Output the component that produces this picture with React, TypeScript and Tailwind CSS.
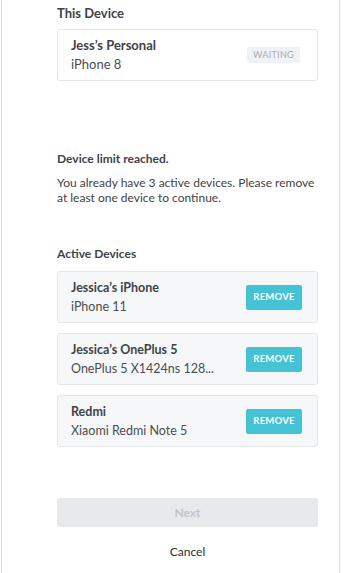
import React from 'react'

const devices = [
  { name: "Jessica’s iPhone", model: 'iPhone 11' },
  { name: "Jessica’s OnePlus 5", model: 'OnePlus 5 X1424ns 128...' },
  { name: 'Redmi', model: 'Xiaomi Redmi Note 5' },
]

export default function App() {
  return (
    <div className="h-[573px] w-[343px] overflow-hidden bg-white font-['Lato',sans-serif] text-[#3f4347]">
      <div className="ml-[1px] h-full w-[339px] border-x border-[#dcdcdc] pl-[55px] pr-[21px]">
        <h2 className="pt-[5px] text-[13px] font-bold leading-[16px]">This Device</h2>

        <div className="mt-[8px] flex h-[52px] items-center justify-between rounded-[3px] border border-[#e3e5e8] bg-white pl-[13px] pr-[17px]">
          <div>
            <p className="text-[13px] font-bold leading-[17px]">Jess’s Personal</p>
            <p className="mt-[2px] text-[13px] leading-[17px] text-[#4a4e52]">iPhone 8</p>
          </div>
          <span className="rounded-[2px] bg-[#f0f3f6] px-[6px] py-[1px] text-[9px] tracking-[0.3px] text-[#a8acb1]">WAITING</span>
        </div>

        <h3 className="mt-[70px] text-[12px] font-bold leading-[16px]">Device limit reached.</h3>
        <p className="mt-[8px] text-[12px] leading-[15px]">
          You already have 3 active devices. Please remove at least one device to continue.
        </p>

        <h3 className="mt-[41px] text-[12px] font-bold leading-[16px]">Active Devices</h3>

        <div className="mt-[9px] flex flex-col gap-[10px]">
          {devices.map((d) => (
            <div key={d.name} className="flex h-[52px] items-center justify-between rounded-[3px] border border-[#e3e6ea] bg-[#f5f7f9] pl-[13px] pr-[15px]">
              <div className="min-w-0">
                <p className="text-[12.5px] font-bold leading-[17px]">{d.name}</p>
                <p className="mt-[2px] whitespace-nowrap text-[12.5px] leading-[17px] text-[#4a4e52]">{d.model}</p>
              </div>
              <button className="h-[25px] w-[56px] shrink-0 rounded-[2px] bg-[#43c3d3] text-[9.5px] font-bold tracking-[0.2px] text-white">
                REMOVE
              </button>
            </div>
          ))}
        </div>

        <button className="mt-[51px] h-[29px] w-full rounded-[2px] bg-[#e8e9eb] text-[12px] font-bold text-[#c2c4c7]">
          Next
        </button>
        <button className="mt-[17px] block w-full text-center text-[12px] leading-[16px] text-[#2b2e31]">Cancel</button>
      </div>
    </div>
  )
}
